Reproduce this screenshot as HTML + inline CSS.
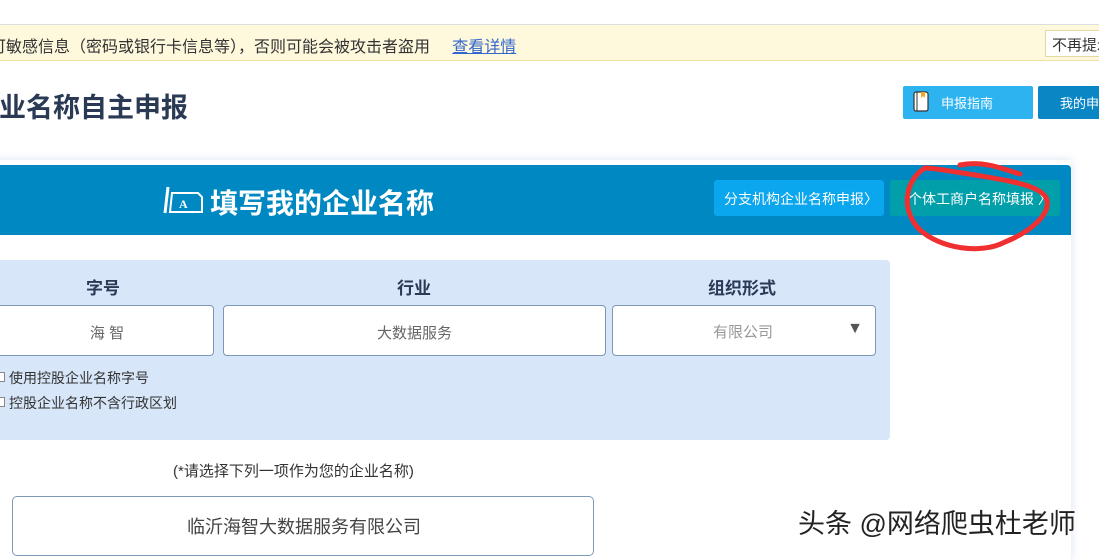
<!DOCTYPE html>
<html><head><meta charset="utf-8"><style>
*{margin:0;padding:0;box-sizing:border-box}
body{width:1099px;height:551px;overflow:hidden;background:#fff;font-family:"Liberation Sans","Noto Sans CJK SC",sans-serif;position:relative}
.a{position:absolute}
</style></head><body>
<div class="a" style="left:0;top:24px;width:1099px;height:1px;background:#ddd"></div>
<div class="a" style="left:0;top:25px;width:1099px;height:36px;background:#fef8dc;border-bottom:1px solid #f0e0a0"></div>
<div class="a" style="left:-10px;top:33px;font-size:16px;color:#333;white-space:nowrap">可敏感信息（密码或银行卡信息等），否则可能会被攻击者盗用 &nbsp;&nbsp;&nbsp; <span style="color:#3366cc;text-decoration:underline">查看详情</span></div>
<div class="a" style="left:1045px;top:30px;width:70px;height:27px;border:1px solid #e6d9a0;background:#fff;font-size:15px;color:#333;padding:3px 0 0 6px;white-space:nowrap">不再提示</div>
<div class="a" style="left:-28px;top:86px;font-size:27px;font-weight:bold;color:#2a3a55;white-space:nowrap">企业名称自主申报</div>
<div class="a" style="left:903px;top:86px;width:130px;height:33px;background:#2db3f0;border-radius:2px"></div>
<svg class="a" style="left:912px;top:91px" width="18" height="22"><rect x="2" y="1" width="14" height="19" rx="2" fill="#fff" stroke="#333" stroke-width="1.2"/><line x1="5" y1="1" x2="5" y2="20" stroke="#333"/><path d="M9 1v6l2-2 2 2V1" fill="#f5a623"/></svg>
<div class="a" style="left:941px;top:93px;font-size:13px;color:#fff">申报指南</div>
<div class="a" style="left:1038px;top:86px;width:70px;height:33px;background:#0b86c4;border-radius:2px;color:#fff;font-size:13px;padding:7px 0 0 22px;white-space:nowrap">我的申报</div>
<div class="a" style="left:-10px;top:160px;width:1081px;height:400px;box-shadow:0 0 8px rgba(100,140,200,.25);background:#fff"></div>
<div class="a" style="left:0;top:165px;width:1071px;height:70px;background:#0088c2;border-radius:0 4px 0 0"></div>
<svg class="a" style="left:162px;top:185px" width="44" height="30"><path d="M6 2 L3 28" stroke="#fff" stroke-width="3"/><path d="M10 8 H36 L40 12 V27 H8 Z" fill="none" stroke="#fff" stroke-width="2"/><text x="17" y="23" font-size="12" font-family="Liberation Serif" fill="#fff" font-weight="bold">A</text></svg>
<div class="a" style="left:210px;top:182px;font-size:28px;font-weight:bold;color:#fff;white-space:nowrap">填写我的企业名称</div>
<div class="a" style="left:714px;top:180px;width:170px;height:36px;background:#0aa6ee;border-radius:3px;color:#fff;font-size:14px;padding:9px 0 0 10px;white-space:nowrap">分支机构企业名称申报〉</div>
<div class="a" style="left:890px;top:180px;width:170px;height:36px;background:#009faa;border-radius:3px;color:#fff;font-size:14px;padding:9px 0 0 18px;white-space:nowrap">个体工商户名称填报 〉</div>
<svg class="a" style="left:895px;top:160px" width="160" height="95"><path d="M30 8 C10 20 5 50 25 70 C45 88 85 95 110 82 C135 72 155 55 152 40 C148 25 110 20 80 15 C60 12 40 8 30 8 M65 5 C90 0 110 10 125 14" fill="none" stroke="#f03030" stroke-width="5" stroke-linecap="round"/></svg>
<div class="a" style="left:0;top:260px;width:890px;height:180px;background:#d7e6f8;border-radius:0 4px 4px 0"></div>
<div class="a" style="left:86px;top:274px;font-size:17px;font-weight:bold;color:#2a3a55">字号</div>
<div class="a" style="left:397px;top:274px;font-size:17px;font-weight:bold;color:#2a3a55">行业</div>
<div class="a" style="left:708px;top:274px;font-size:17px;font-weight:bold;color:#2a3a55">组织形式</div>
<div class="a" style="left:-5px;top:305px;width:219px;height:51px;background:#fff;border:1px solid #7e98b8;border-radius:4px;text-align:center;font-size:15px;color:#666;padding-top:16px;padding-left:5px">海 智</div>
<div class="a" style="left:223px;top:305px;width:383px;height:51px;background:#fff;border:1px solid #7e98b8;border-radius:4px;text-align:center;font-size:15px;color:#666;padding-top:16px">大数据服务</div>
<div class="a" style="left:612px;top:305px;width:264px;height:51px;background:#fff;border:1px solid #7e98b8;border-radius:4px;font-size:15px;color:#999;padding:15px 0 0 100px">有限公司<span style="position:absolute;right:12px;top:14px;color:#555;font-size:16px">▼</span></div>
<div class="a" style="left:-4px;top:372px;width:9px;height:10px;border:1px solid #888;background:#fff"></div>
<div class="a" style="left:9px;top:368px;font-size:14px;color:#333">使用控股企业名称字号</div>
<div class="a" style="left:-4px;top:397px;width:9px;height:10px;border:1px solid #888;background:#fff"></div>
<div class="a" style="left:9px;top:393px;font-size:14px;color:#333">控股企业名称不含行政区划</div>
<div class="a" style="left:173px;top:460px;font-size:15px;color:#333">(*请选择下列一项作为您的企业名称)</div>
<div class="a" style="left:12px;top:496px;width:582px;height:60px;border:1px solid #7e98b8;border-radius:5px;background:#fff;font-size:18px;color:#444;padding:16px 0 0 174px">临沂海智大数据服务有限公司</div>
<div class="a" style="left:798px;top:502px;font-size:27px;color:#222;white-space:nowrap;text-shadow:0 0 2px #fff">头条 @网络爬虫杜老师</div>
</body></html>
